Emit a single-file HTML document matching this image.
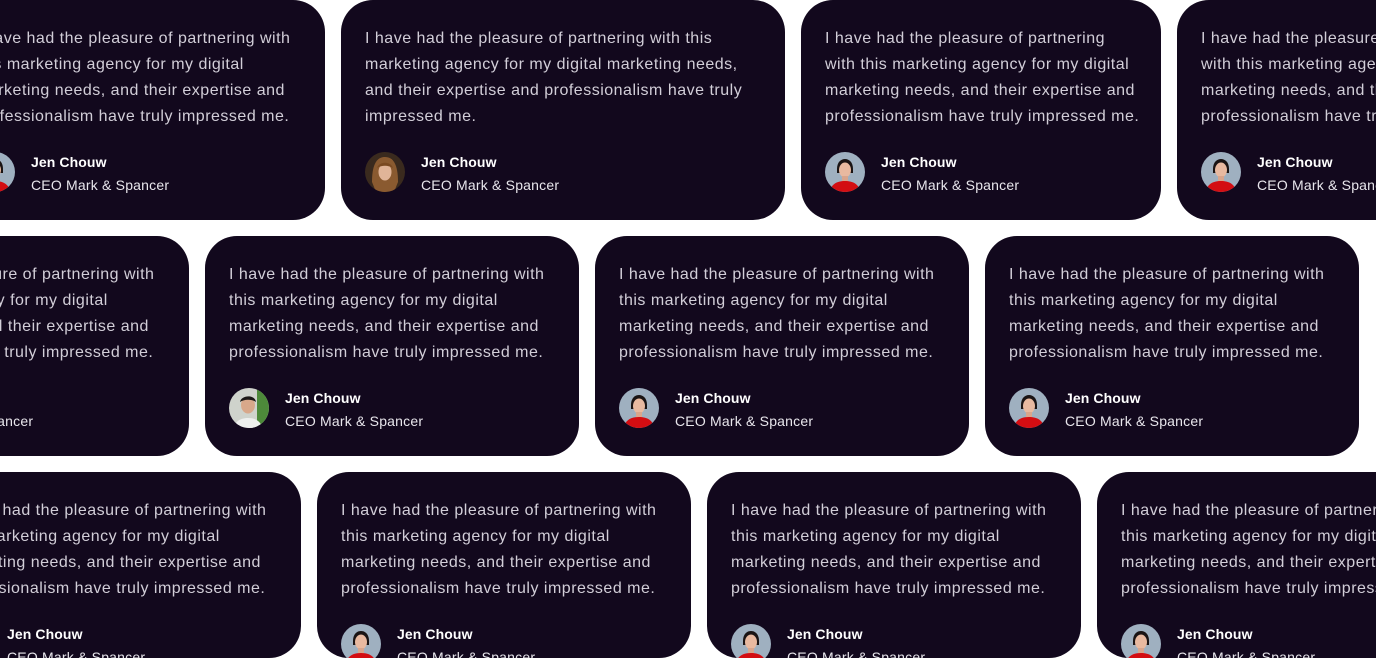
<!DOCTYPE html>
<html><head><meta charset="utf-8"><style>
html,body{margin:0;padding:0;background:#fff;width:1376px;height:658px;overflow:hidden;position:relative;font-family:"Liberation Sans",sans-serif}
.c{position:absolute;height:220px;background:#12081d;border-radius:32px;box-sizing:border-box;padding:26px 0 0 24px;overflow:hidden}
.t{color:#d2ced8;font-size:16px;line-height:26px;white-space:nowrap;letter-spacing:0.5px}
.a{position:absolute;left:24px;top:152px;width:40px;height:40px;border-radius:50%;overflow:hidden}
.n{position:absolute;left:80px;top:153px;color:#fff;font-weight:bold;font-size:14px;line-height:18px;white-space:nowrap;letter-spacing:0.1px}
.r{position:absolute;left:80px;top:176px;color:#e8e6ec;font-size:14px;line-height:18px;white-space:nowrap;letter-spacing:0.2px}
</style></head><body>
<svg width="0" height="0" style="position:absolute"><defs>
<symbol id="w" viewBox="0 0 40 40"><rect width="40" height="40" fill="#9fb0c0"/><path d="M12 17c0-7 4-10 8-10s8 3 8 10v4h-16z" fill="#1a1414"/><ellipse cx="20" cy="18" rx="6" ry="7.5" fill="#e8b9a0"/><rect x="17" y="24" width="6" height="6" fill="#d9a58c"/><path d="M5 40c1-8 7-11 15-11s14 3 15 11z" fill="#d30d12"/></symbol>
<symbol id="g" viewBox="0 0 40 40"><rect width="40" height="40" fill="#3a2a1e"/><path d="M7 30c0-18 5-25 13-25s13 7 13 25l-4 10h-18z" fill="#8a5a30"/><ellipse cx="20" cy="20" rx="6.5" ry="8.5" fill="#e0b498"/><path d="M12 16c2-7 14-7 16 0c-5-3-11-3-16 0z" fill="#7a4a22"/></symbol>
<symbol id="m" viewBox="0 0 40 40"><rect width="40" height="40" fill="#cfd3cc"/><rect x="28" width="12" height="40" fill="#4d8a3a"/><ellipse cx="19" cy="17" rx="7" ry="8.5" fill="#d8a88a"/><path d="M11 14c1-7 15-8 16 0c-4-3-12-3-16 0z" fill="#1b1816"/><path d="M5 40c1-7 7-10 14-10s13 3 14 10z" fill="#eef0ee"/></symbol>
</defs></svg>

<!-- Row 1 -->
<div class="c" style="left:-49px;top:0;width:374px"><div class="t">I have had the pleasure of partnering with<br>this marketing agency for my digital<br>marketing needs, and their expertise and<br>professionalism have truly impressed me.</div><svg class="a"><use href="#w"/></svg><div class="n">Jen Chouw</div><div class="r">CEO Mark &amp; Spancer</div></div>
<div class="c" style="left:341px;top:0;width:444px"><div class="t">I have had the pleasure of partnering with this<br>marketing agency for my digital marketing needs,<br>and their expertise and professionalism have truly<br>impressed me.</div><svg class="a"><use href="#g"/></svg><div class="n">Jen Chouw</div><div class="r">CEO Mark &amp; Spancer</div></div>
<div class="c" style="left:801px;top:0;width:360px"><div class="t">I have had the pleasure of partnering<br>with this marketing agency for my digital<br>marketing needs, and their expertise and<br>professionalism have truly impressed me.</div><svg class="a"><use href="#w"/></svg><div class="n">Jen Chouw</div><div class="r">CEO Mark &amp; Spancer</div></div>
<div class="c" style="left:1177px;top:0;width:360px"><div class="t">I have had the pleasure of partnering<br>with this marketing agency for my digital<br>marketing needs, and their expertise and<br>professionalism have truly impressed me.</div><svg class="a"><use href="#w"/></svg><div class="n">Jen Chouw</div><div class="r">CEO Mark &amp; Spancer</div></div>

<!-- Row 2 -->
<div class="c" style="left:-185px;top:236px;width:374px"><div class="t">I have had the pleasure of partnering with<br>this marketing agency for my digital<br>marketing needs, and their expertise and<br>professionalism have truly impressed me.</div><svg class="a"><use href="#w"/></svg><div class="n">Jen Chouw</div><div class="r">CEO Mark &amp; Spancer</div></div>
<div class="c" style="left:205px;top:236px;width:374px"><div class="t">I have had the pleasure of partnering with<br>this marketing agency for my digital<br>marketing needs, and their expertise and<br>professionalism have truly impressed me.</div><svg class="a"><use href="#m"/></svg><div class="n">Jen Chouw</div><div class="r">CEO Mark &amp; Spancer</div></div>
<div class="c" style="left:595px;top:236px;width:374px"><div class="t">I have had the pleasure of partnering with<br>this marketing agency for my digital<br>marketing needs, and their expertise and<br>professionalism have truly impressed me.</div><svg class="a"><use href="#w"/></svg><div class="n">Jen Chouw</div><div class="r">CEO Mark &amp; Spancer</div></div>
<div class="c" style="left:985px;top:236px;width:374px"><div class="t">I have had the pleasure of partnering with<br>this marketing agency for my digital<br>marketing needs, and their expertise and<br>professionalism have truly impressed me.</div><svg class="a"><use href="#w"/></svg><div class="n">Jen Chouw</div><div class="r">CEO Mark &amp; Spancer</div></div>

<!-- Row 3 -->
<div class="c" style="left:-73px;top:472px;width:374px;height:186px"><div class="t">I have had the pleasure of partnering with<br>this marketing agency for my digital<br>marketing needs, and their expertise and<br>professionalism have truly impressed me.</div><svg class="a"><use href="#w"/></svg><div class="n">Jen Chouw</div><div class="r">CEO Mark &amp; Spancer</div></div>
<div class="c" style="left:317px;top:472px;width:374px;height:186px"><div class="t">I have had the pleasure of partnering with<br>this marketing agency for my digital<br>marketing needs, and their expertise and<br>professionalism have truly impressed me.</div><svg class="a"><use href="#w"/></svg><div class="n">Jen Chouw</div><div class="r">CEO Mark &amp; Spancer</div></div>
<div class="c" style="left:707px;top:472px;width:374px;height:186px"><div class="t">I have had the pleasure of partnering with<br>this marketing agency for my digital<br>marketing needs, and their expertise and<br>professionalism have truly impressed me.</div><svg class="a"><use href="#w"/></svg><div class="n">Jen Chouw</div><div class="r">CEO Mark &amp; Spancer</div></div>
<div class="c" style="left:1097px;top:472px;width:279px;height:186px;border-radius:32px 0 0 32px"><div class="t">I have had the pleasure of partnering with<br>this marketing agency for my digital<br>marketing needs, and their expertise and<br>professionalism have truly impressed me.</div><svg class="a"><use href="#w"/></svg><div class="n">Jen Chouw</div><div class="r">CEO Mark &amp; Spancer</div></div>
</body></html>
